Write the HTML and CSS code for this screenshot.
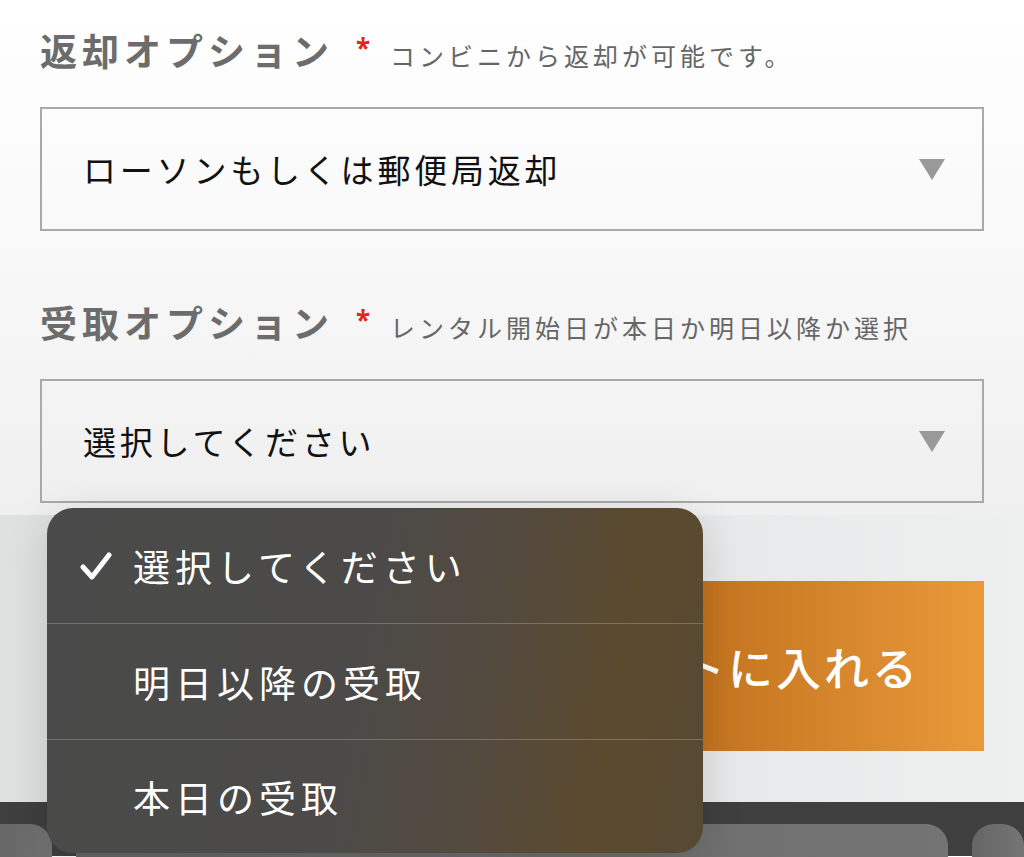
FILE: index.html
```html
<!DOCTYPE html>
<html lang="ja">
<head>
    <meta charset="UTF-8">
    <meta name="viewport" content="width=device-width, initial-scale=1.0">
    <title>レンタル注文</title>
    <link rel="stylesheet" href="styles.css">
</head>
<body>
    <div class="page">
        <main class="form">
            <div class="field">
                <div class="field-label">
                    <span class="label-main">返却オプション</span><span class="req">*</span><span class="label-note">コンビニから返却が可能です。</span>
                </div>
                <div class="select">
                    <span class="select-value">ローソンもしくは郵便局返却</span>
                    <span class="arrow"></span>
                </div>
            </div>
            <div class="field field-second">
                <div class="field-label">
                    <span class="label-main">受取オプション</span><span class="req">*</span><span class="label-note">レンタル開始日が本日か明日以降か選択</span>
                </div>
                <div class="select">
                    <span class="select-value">選択してください</span>
                    <span class="arrow"></span>
                </div>
            </div>
        </main>

        <section class="cart-bar">
            <button class="cart-btn" type="button">カートに入れる</button>
        </section>

        <footer class="toolbar">
            <div class="key key-left"></div>
            <div class="key key-mid"></div>
            <div class="key key-right"></div>
        </footer>

        <!-- iOS style picker menu for 受取オプション -->
        <ul class="picker">
            <li class="picker-item selected">
                <svg class="check" viewBox="0 0 32 30" width="32" height="30">
                    <polyline points="3,16 12,26 29,4" fill="none" stroke="#fff" stroke-width="5" stroke-linecap="round" stroke-linejoin="round"/>
                </svg>
                <span>選択してください</span>
            </li>
            <li class="picker-item"><span>明日以降の受取</span></li>
            <li class="picker-item"><span>本日の受取</span></li>
        </ul>
    </div>
</body>
</html>
```

FILE: styles.css
```css
body {
    margin: 0;
    padding: 0;
    font-family: "Noto Sans CJK JP", "Noto Sans", sans-serif;
    background-color: #fff;
}
.page {
    position: relative;
    width: 1024px;
    height: 857px;
    overflow: hidden;
}
.form {
    padding: 26px 40px 12px;
    background: linear-gradient(to bottom, #ffffff 0%, #f9f9f9 45%, #efefef 100%);
}
.field-second {
    margin-top: 67px;
}
.field-label {
    height: 48px;
    line-height: 48px;
    white-space: nowrap;
}
.label-main {
    font-size: 37px;
    font-weight: 700;
    color: #6c6c6c;
    letter-spacing: 5px;
}
.req {
    display: inline-block;
    margin-left: 22px;
    font-family: "Noto Sans", sans-serif;
    font-size: 26px;
    font-weight: 700;
    color: #e2261c;
    vertical-align: 8px;
    line-height: 1;
}
.label-note {
    margin-left: 20px;
    font-size: 25px;
    color: #666;
    letter-spacing: 4px;
}
.select {
    margin-top: 33px;
    height: 120px;
    border: 2px solid #a9a9a9;
    display: flex;
    align-items: center;
    justify-content: space-between;
    padding: 0 37px 0 41px;
}
.select-value {
    font-size: 33px;
    color: #111;
    letter-spacing: 3.8px;
}
.arrow {
    width: 0;
    height: 0;
    border-left: 13px solid transparent;
    border-right: 13px solid transparent;
    border-top: 21px solid #999;
}
.cart-bar {
    height: 221px;
    padding: 66px 40px 0 520px;
    background: linear-gradient(to right, #dfe0e0 0%, #e5e6e7 60%, #eef0f0 100%);
}
.cart-btn {
    width: 100%;
    height: 170px;
    border: none;
    display: flex;
    align-items: center;
    justify-content: center;
    padding: 0;
    background: linear-gradient(to right, #b5631a 0%, #c4741f 40%, #ea993a 100%);
    color: #fff;
    font-family: "Noto Sans CJK JP", sans-serif;
    font-size: 45px;
    font-weight: 500;
    letter-spacing: 3px;
}
.toolbar {
    height: 32px;
    padding-top: 22px;
    display: flex;
    gap: 24px;
    background-color: #3f3f3f;
}
.key {
    height: 40px;
    border-radius: 22px 22px 0 0;
    background: linear-gradient(to right, #666, #747474);
}
.key-left {
    width: 52px;
    border-radius: 0 22px 0 0;
}
.key-mid {
    flex: 1;
}
.key-right {
    width: 52px;
}
.picker {
    position: absolute;
    left: 47px;
    top: 508px;
    width: 656px;
    height: 345px;
    margin: 0;
    padding: 0;
    list-style: none;
    border-radius: 26px;
    overflow: hidden;
    background: linear-gradient(100deg, #4a4a4a 0%, #4b4a49 45%, #534a3f 65%, #5b4a2e 84%, #564933 100%);
    box-shadow: 0 10px 40px rgba(0, 0, 0, 0.15);
}
.picker-item {
    height: 115px;
    display: flex;
    align-items: center;
    padding-left: 86px;
    font-size: 37px;
    color: #fff;
    letter-spacing: 5px;
    border-top: 1px solid rgba(255, 255, 255, 0.22);
}
.picker-item:first-child {
    border-top: none;
    padding-left: 33px;
}
.picker-item:last-child {
    height: 114px;
}
.check {
    margin-right: 21px;
}
```
